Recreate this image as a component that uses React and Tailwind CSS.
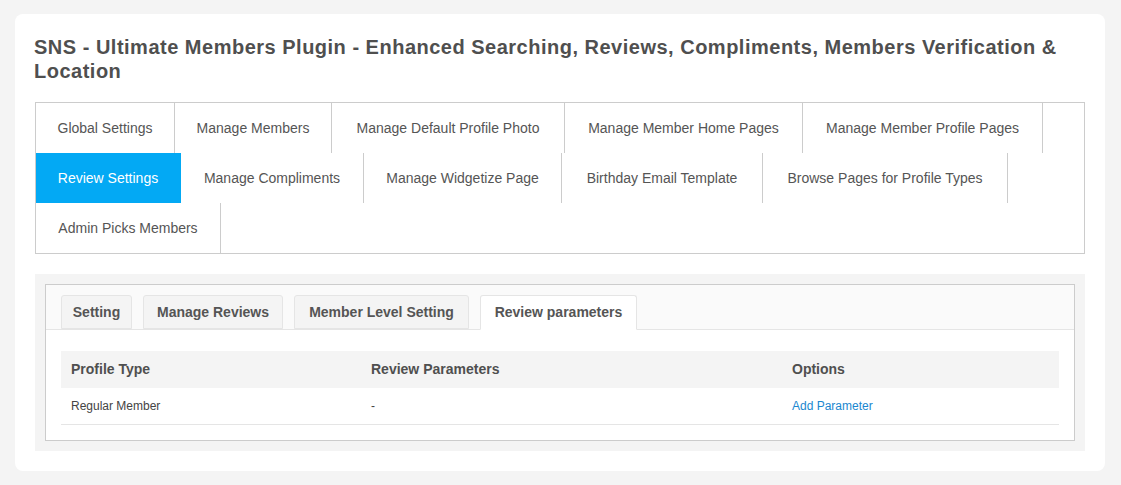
const MAIN_TABS = [
  { label: 'Global Settings', w: 'w-[139px]' },
  { label: 'Manage Members', w: 'w-[157px]' },
  { label: 'Manage Default Profile Photo', w: 'w-[233px]' },
  { label: 'Manage Member Home Pages', w: 'w-[238px]' },
  { label: 'Manage Member Profile Pages', w: 'w-[240px]' },
  { label: 'Review Settings', w: 'w-[145px]', active: true },
  { label: 'Manage Compliments', w: 'w-[183px]' },
  { label: 'Manage Widgetize Page', w: 'w-[198px]' },
  { label: 'Birthday Email Template', w: 'w-[201px]' },
  { label: 'Browse Pages for Profile Types', w: 'w-[245px]' },
  { label: 'Admin Picks Members', w: 'w-[185px]' },
];

const SUB_TABS = [
  { label: 'Setting', w: 'w-[71px]' },
  { label: 'Manage Reviews', w: 'w-[140px]' },
  { label: 'Member Level Setting', w: 'w-[175px]' },
  { label: 'Review parameters', w: 'w-[157px]', active: true },
];

function App() {
  return (
    <div className="min-h-screen bg-[#f4f4f4] pt-[14px] pl-[15px] font-['Liberation_Sans',Arial,sans-serif]">
      <div className="w-[1090px] rounded-lg bg-white px-[20px] pt-[21px] pb-[20px]">
        <h1 className="text-[20px] leading-[24px] font-bold tracking-[0.5px] text-[#4f4f4f] -ml-[1px]">
          SNS - Ultimate Members Plugin - Enhanced Searching, Reviews, Compliments, Members Verification &amp; Location
        </h1>

        {/* main tabs */}
        <div className="mt-[19px] flex flex-wrap border border-[#cccccc]">
          {MAIN_TABS.map((t) => (
            <div
              key={t.label}
              className={`${t.w} h-[50px] flex items-center justify-center border-r border-[#cccccc] text-[14px] ${
                t.active ? 'bg-[#03a9f4] text-white border-r-[#03a9f4]' : 'text-[#555555]'
              }`}
            >
              {t.label}
            </div>
          ))}
        </div>

        {/* review settings panel */}
        <div className="mt-[20px] bg-[#f4f4f4] p-[10px]">
          <div className="border border-[#cccccc] bg-white">
            <div className="flex gap-[11px] bg-[#fafafa] px-[15px] pt-[10px] border-b border-[#e5e5e5]">
              {SUB_TABS.map((t) => (
                <div
                  key={t.label}
                  className={`${t.w} h-[34px] -mb-[1px] flex items-center justify-center rounded-t-[3px] border border-[#e5e5e5] text-[14px] font-bold text-[#555555] ${
                    t.active ? 'bg-white border-b-white h-[35px]' : 'bg-[#f4f4f4] border-b-[#e5e5e5]'
                  }`}
                >
                  {t.label}
                </div>
              ))}
            </div>

            <div className="px-[15px] pt-[21px] pb-[15px]">
              <table className="w-full border-collapse">
                <thead>
                  <tr className="bg-[#f4f4f4] h-[37px]">
                    <th className="w-[300px] pl-[10px] text-left text-[14px] font-bold text-[#4f4f4f]">Profile Type</th>
                    <th className="w-[421px] pl-[10px] text-left text-[14px] font-bold text-[#4f4f4f]">Review Parameters</th>
                    <th className="pl-[10px] text-left text-[14px] font-bold text-[#4f4f4f]">Options</th>
                  </tr>
                </thead>
                <tbody>
                  <tr className="h-[36px] border-b border-[#e5e5e5]">
                    <td className="pl-[10px] text-[12px] text-[#444444]">Regular Member</td>
                    <td className="pl-[10px] text-[12px] text-[#444444]">-</td>
                    <td className="pl-[10px] text-[12px] text-[#1b87cf]">Add Parameter</td>
                  </tr>
                </tbody>
              </table>
            </div>
          </div>
        </div>
      </div>
    </div>
  );
}

export default App;
